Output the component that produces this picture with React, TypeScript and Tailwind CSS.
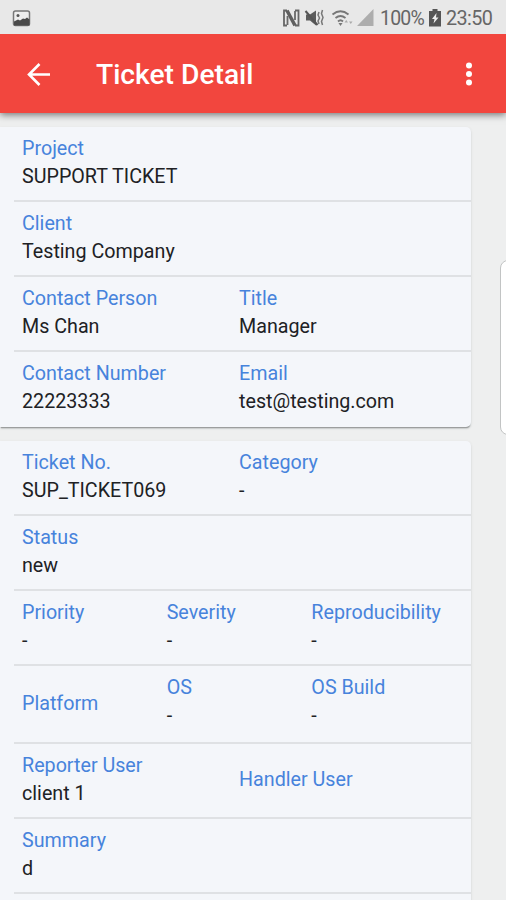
type Field = { label: string; value?: string };

const contactRows: Field[][] = [
  [{ label: "Project", value: "SUPPORT TICKET" }],
  [{ label: "Client", value: "Testing Company" }],
  [{ label: "Contact Person", value: "Ms Chan" }, { label: "Title", value: "Manager" }],
  [{ label: "Contact Number", value: "22223333" }, { label: "Email", value: "test@testing.com" }],
];

const ticketRows: Field[][] = [
  [{ label: "Ticket No.", value: "SUP_TICKET069" }, { label: "Category", value: "-" }],
  [{ label: "Status", value: "new" }],
  [{ label: "Priority", value: "-" }, { label: "Severity", value: "-" }, { label: "Reproducibility", value: "-" }],
  [{ label: "Platform" }, { label: "OS", value: "-" }, { label: "OS Build", value: "-" }],
  [{ label: "Reporter User", value: "client 1" }, { label: "Handler User" }],
  [{ label: "Summary", value: "d" }],
];

function Row({ fields, last, tall }: { fields: Field[]; last: boolean; tall: boolean }) {
  return (
    <div
      className={`ml-[14px] flex shrink-0 items-center pt-[8px] pr-[15px] pb-[9px] pl-2 ${tall ? "h-[78px]" : "h-[75px]"} ${last ? "" : "border-b-2 border-[#dfe1e4]"}`}
    >
      {fields.map((f) => (
        <div key={f.label} className={`min-w-0 flex-1 ${f.value ? "self-start" : ""}`}>
          <div className="h-7 whitespace-nowrap leading-7 text-[#4783dc]">{f.label}</div>
          {f.value && <div className="h-7 whitespace-nowrap leading-7 text-[#202124]">{f.value}</div>}
        </div>
      ))}
    </div>
  );
}

function Card({ rows, continues }: { rows: Field[][]; continues?: boolean }) {
  return (
    <section
      className={`w-[471px] shrink-0 rounded-r-[5px] bg-[#f4f6fa] shadow-[0_2px_1px_-1px_#999c9c,0_2px_2px_-1px_#a4a7a7,0_1px_3px_#d8dada] ${continues ? "pb-5" : ""}`}
    >
      {rows.map((r, i) => (
        <Row
          key={r[0].label}
          fields={r}
          last={!continues && i === rows.length - 1}
          tall={r[0].label === "Platform"}
        />
      ))}
    </section>
  );
}

function StatusIcons() {
  return (
    <svg width="94" height="20" viewBox="281 8 94 20" fill="none">
      <path d="M287 25.500h-3V10.500h3M295 10.500h3.500v15H295" stroke="#666" strokeWidth="1.800" />
      <path d="M287 10.500l8 15" stroke="#5f5f5f" strokeWidth="3.500" />
      <path d="M287.500 16v9M295 11v9" stroke="#6a6a6a" strokeWidth="1.800" />
      <path d="M306 14.500h4l6-4v15l-6-5h-4z" fill="#5c5c5c" />
      <path d="M305.500 11l12 14" stroke="#555" strokeWidth="2" />
      <path d="M319 12l-1 3 1.500 3-1.500 3 1 3M322.500 10l-1 3.500 1.500 4-1.500 4 1 3.500" stroke="#777" strokeWidth="1.500" />
      <path d="M332.500 14.500q8-6.500 16 0M335.500 18q5-4 10 0M338 21.500q2.500-2.500 5 0" stroke="#777" strokeWidth="1.800" />
      <path d="M340.500 26l-2-3h4z" fill="#777" />
      <path d="M344.500 22.500l1.800-2.500 1.700 2.500zM349 21.500h3.500l-1.700 2.500z" fill="#aaa" />
      <path d="M357 26L373.500 9v17z" fill="#adadad" />
    </svg>
  );
}

export default function App() {
  return (
    <div className="relative flex h-[900px] w-[506px] flex-col overflow-hidden bg-[#eeefef] font-[Roboto,sans-serif] text-[19.7px]">
      <header className="z-10 shrink-0 bg-[#f2463e] shadow-[0_2px_7px_rgba(0,0,0,0.5)]">
        <div className="flex h-[34px] items-center bg-[#e8e8e8] pt-[2px] pl-[12px] text-[#666]">
          <svg width="19" height="17" viewBox="0 0 19 17">
            <rect x="1.500" y="1" width="16" height="14.500" rx="2" fill="#eee" stroke="#777" strokeWidth="1.500" />
            <path d="M2 11.500l4-2 2 1 3-2 2 .5 2-1.500 2.500 2V15.500H2z" fill="#4a4a4a" />
            <circle cx="6" cy="5.500" r="1.500" fill="#555" />
          </svg>
          <div className="ml-[250px] flex items-center">
            <StatusIcons />
            <span className="mt-[2px] ml-[5px] w-[46px] text-[19.5px] leading-6 tracking-[-0.8px]">100%</span>
            <svg className="ml-[3px]" width="12" height="18" viewBox="0 0 12 18">
              <path d="M3.500 0h5v2H12v15.500H0V2h3.500z" fill="#555" />
              <path d="M7.500 4L3 10h2.500L4.500 14.500l5-6H7z" fill="#eee" />
            </svg>
            <span className="mt-[2px] ml-[5px] text-[19.8px] leading-6 tracking-[-0.6px]">23:50</span>
          </div>
        </div>
        <div className="flex h-[79px] items-center pl-[26px] text-white">
          <svg width="24" height="24" viewBox="0 0 24 24" fill="none" stroke="white" strokeWidth="2.600">
            <path d="M24 12.500H3M13.500 2L3 12.500l10.500 10.500" />
          </svg>
          <h1 className="mt-[2px] ml-[46px] w-[369px] text-[28.2px] leading-[32px] font-medium">Ticket Detail</h1>
          <svg width="8" height="24" viewBox="0 0 8 24" fill="white">
            <circle cx="4" cy="3.500" r="3" />
            <circle cx="4" cy="12" r="3" />
            <circle cx="4" cy="20.500" r="3" />
          </svg>
        </div>
      </header>
      <main className="flex min-h-0 flex-1 flex-col gap-[14px] overflow-hidden pt-[14px]">
        <Card rows={contactRows} />
        <Card rows={ticketRows} continues />
      </main>
      <div className="absolute top-[260px] left-[500px] h-[175px] w-5 rounded-lg border border-[#c2c4c4] bg-white" />
    </div>
  );
}
